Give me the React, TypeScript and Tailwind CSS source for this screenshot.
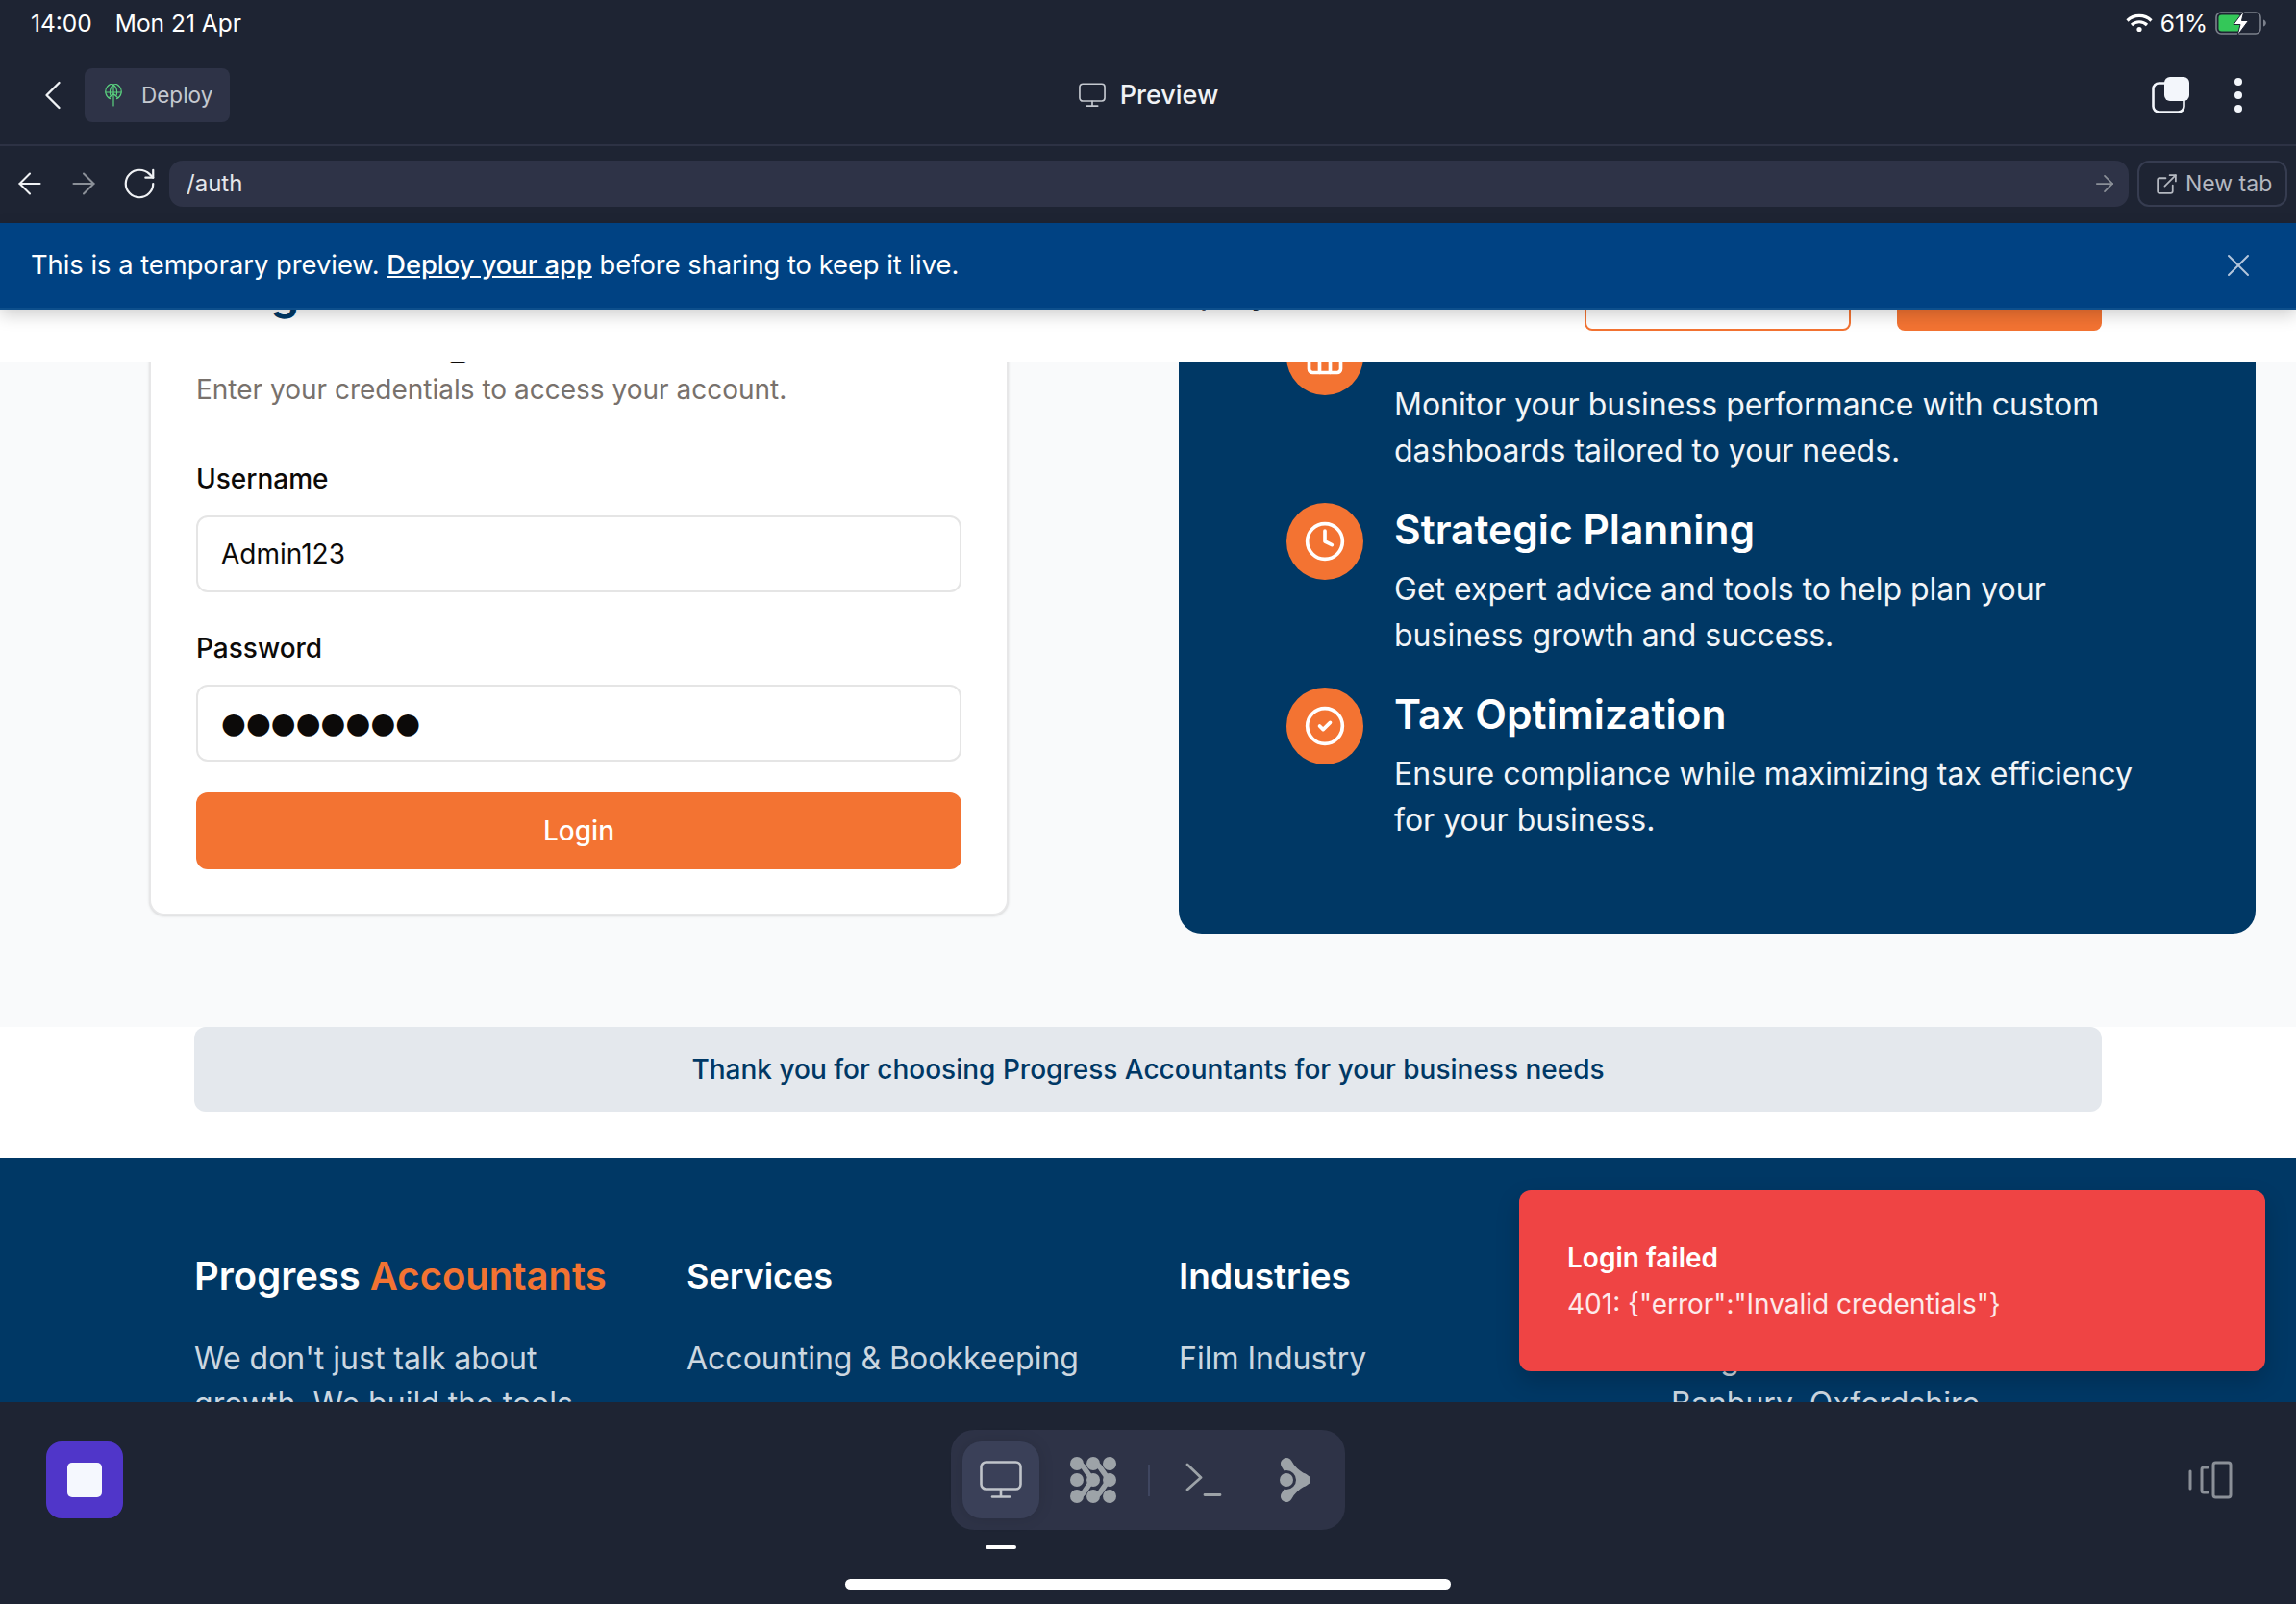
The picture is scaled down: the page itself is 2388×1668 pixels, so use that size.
import React from 'react';
import { ArrowLeft, ArrowRight, ChevronLeft, CircleCheck, Clock, Columns3, ExternalLink, RotateCw, X } from 'lucide-react';

function MonitorIcon({ className }: { className?: string }) {
  return (
    <svg className={className} viewBox="0 0 44 40" fill="none" stroke="currentColor" strokeWidth={2.6} strokeLinecap="round" strokeLinejoin="round">
      <rect x="1.5" y="1.5" width="41" height="28" rx="5" />
      <path d="M22 30v7M13 37.5h18" />
    </svg>
  );
}

function DeployIcon() {
  return (
    <svg className="h-[24px] w-[18px] text-[#5ad27f]" viewBox="0 0 18 24" fill="none" stroke="currentColor" strokeWidth={1.2} strokeLinecap="round" strokeLinejoin="round">
      <path d="M5.5 15.6A8.2 8.2 0 1 1 12.5 15.6" />
      <path d="M1 9h16M9 1v22M9 1c-2.6 2-3.6 4.8-3.6 8 0 1.600.3 3 .8 4M9 1c2.600 2 3.600 4.800 3.600 8 0 1.600-.3 3-.8 4M4.800 14.200 9 10.500l4.200 3.700" />
    </svg>
  );
}

function WifiIcon() {
  return (
    <svg className="h-[20px] w-[28px] text-white" viewBox="0 0 28 20" fill="none" stroke="currentColor" strokeWidth={3.2} strokeLinecap="butt">
      <path d="M1.500 7.500a18 18 0 0 1 25 0" />
      <path d="M6 12a11.500 11.500 0 0 1 16 0" />
      <circle cx="14" cy="16.500" r="2.600" fill="currentColor" stroke="none" />
    </svg>
  );
}

function BatteryIcon() {
  return (
    <svg className="h-[26px] w-[54px]" viewBox="0 0 54 26" fill="none">
      <rect x="1" y="2" width="46" height="22" rx="5" stroke="#7c818c" strokeWidth="1.600" />
      <rect x="3.500" y="4.500" width="23" height="17" rx="3" fill="#34c759" />
      <path d="M50 9.500c2 .6 2.800 2 2.800 3.500s-.8 2.900-2.800 3.500z" fill="#7c818c" />
      <path d="M30 0 19 14.500h7L23 26l11.500-15.500h-7z" fill="#fff" stroke="#1e2433" strokeWidth="1" />
    </svg>
  );
}

function TabsIcon() {
  return (
    <svg className="h-[38px] w-[39px] text-[#f3f6fb]" viewBox="0 0 39 38" fill="none">
      <rect x="1.500" y="6.500" width="32" height="30" rx="6" stroke="currentColor" strokeWidth="2.600" />
      <rect x="13" y="0" width="26" height="25" rx="6" fill="currentColor" />
    </svg>
  );
}

function ClusterIcon() {
  return (
    <svg className="h-[48px] w-[48px] text-[#9da3a8]" viewBox="0 0 48 48" fill="currentColor">
      {[7, 24, 41].map((cx) =>
        [7, 24, 41].map((cy) => <circle key={`${cx}-${cy}`} cx={cx} cy={cy} r="7" />),
      )}
      <path d="M7 7c8 0 8 8.500 17 17-9 8.500-9 17-17 17" fill="none" stroke="currentColor" strokeWidth="5.500" />
      <path d="M24 7c8 0 8 8.500 17 17-9 8.500-9 17-17 17" fill="none" stroke="currentColor" strokeWidth="5.500" />
    </svg>
  );
}

function BranchIcon() {
  return (
    <svg className="h-[48px] w-[32px] text-[#9da3a8]" viewBox="0 0 32 48" fill="currentColor">
      <path d="M7 7c4 8 9 12 18 17-9 5-14 9-18 17" fill="none" stroke="currentColor" strokeWidth="12" strokeLinecap="round" />
      <circle cx="24" cy="24" r="7" />
      <circle cx="7" cy="24" r="10" fill="#2e3347" />
      <circle cx="7" cy="24" r="7" />
    </svg>
  );
}

function TerminalGlyph() {
  return (
    <svg className="h-[36px] w-[38px] text-[#9da3a8]" viewBox="0 0 38 36" fill="none" stroke="currentColor" strokeWidth="2.800" strokeLinecap="round" strokeLinejoin="round">
      <path d="M2 2l14 13.500L2 28M20 33.500h16" />
    </svg>
  );
}

function SplitIcon() {
  return (
    <svg className="h-[40px] w-[46px] text-[#8b9098]" viewBox="0 0 46 40" fill="none" stroke="currentColor" strokeWidth="3" strokeLinecap="round" strokeLinejoin="round">
      <rect x="26" y="2" width="18" height="36" rx="2.500" />
      <path d="M20 7h-4a2 2 0 0 0-2 2v22a2 2 0 0 0 2 2h4M2 11v18" />
    </svg>
  );
}

const features = [
  {
    icon: Columns3,
    title: 'Business Dashboard',
    text: 'Monitor your business performance with custom dashboards tailored to your needs.',
  },
  {
    icon: Clock,
    title: 'Strategic Planning',
    text: 'Get expert advice and tools to help plan your business growth and success.',
  },
  {
    icon: CircleCheck,
    title: 'Tax Optimization',
    text: 'Ensure compliance while maximizing tax efficiency for your business.',
  },
];

function LoginCard() {
  return (
    <div className="w-[894px] rounded-[16px] border-2 border-[#e7e7e8] bg-white px-[47px] pt-[46px] pb-[46px] shadow-sm">
      <h2 className="text-[47px] leading-[64px] font-semibold text-[#0c0a09]">Account Login</h2>
      <p className="text-[28px] leading-[44px] text-[#78716c]">Enter your credentials to access your account.</p>
      <label className="mt-[51px] block text-[28px] leading-[40px] font-medium text-[#0c0a09]">Username</label>
      <input
        readOnly
        value="Admin123"
        className="mt-[18px] block h-[80px] w-full rounded-[12px] border-2 border-[#e5e5e5] bg-white px-[24px] text-[28px] text-[#0c0a09] outline-none"
      />
      <label className="mt-[38px] block text-[28px] leading-[40px] font-medium text-[#0c0a09]">Password</label>
      <input
        readOnly
        value="●●●●●●●●"
        className="mt-[18px] block h-[80px] w-full rounded-[12px] border-2 border-[#e5e5e5] bg-white px-[24px] pb-[2px] font-['DejaVu_Sans',sans-serif] text-[29.7px] text-[#0c0a09] outline-none"
      />
      <button className="mt-[32px] block h-[80px] w-full rounded-[12px] bg-[#f37332] text-[28px] font-medium text-white">Login</button>
    </div>
  );
}

function FeaturePanel() {
  return (
    <div className="flex w-[1120px] flex-col gap-[30px] rounded-[24px] bg-[#003865] pt-[60px] pr-[112px] pb-[94px] pl-[112px]">
      {features.map((f) => (
        <div key={f.title} className="flex gap-[32px]">
          <div className="flex h-[80px] w-[80px] shrink-0 items-center justify-center rounded-full bg-[#f37332] text-white">
            <f.icon size={44} strokeWidth={2} />
          </div>
          <div>
            <h3 className="text-[42.5px] leading-[56px] font-semibold text-white">{f.title}</h3>
            <p className="mt-[10px] text-[32px] leading-[48px] text-[#f2f5f8]">{f.text}</p>
          </div>
        </div>
      ))}
    </div>
  );
}

function Footer() {
  return (
    <footer className="bg-[#003865] px-[202px] pt-[95px] pb-[64px]">
      <div className="grid w-[1984px] grid-cols-4 gap-[64px]">
        <div>
          <h4 className="text-[40px] leading-[56px] font-semibold text-white">
            Progress <span className="text-[#f37332]">Accountants</span>
          </h4>
          <p className="mt-[34px] text-[32px] leading-[47px] text-[#ccd7e0]">We don't just talk about growth. We build the tools that make it happen.</p>
        </div>
        <div>
          <h4 className="text-[36px] leading-[56px] font-semibold text-white">Services</h4>
          <ul className="mt-[34px] text-[32px] leading-[47px] text-[#ccd7e0]">
            <li>Accounting &amp; Bookkeeping</li>
            <li className="mt-[16px]">Tax Planning</li>
          </ul>
        </div>
        <div>
          <h4 className="text-[37px] leading-[56px] font-semibold text-white">Industries</h4>
          <ul className="mt-[34px] text-[32px] leading-[47px] text-[#ccd7e0]">
            <li>Film Industry</li>
            <li className="mt-[16px]">Music Industry</li>
          </ul>
        </div>
        <div>
          <h4 className="text-[36px] leading-[56px] font-semibold text-white">Contact</h4>
          <p className="mt-[34px] text-[32px] leading-[47px] text-[#ccd7e0]">
            Progress Accountants
            <br />
            Banbury, Oxfordshire
          </p>
        </div>
      </div>
    </footer>
  );
}

export default function App() {
  return (
    <div className="flex h-[1668px] w-[2388px] flex-col overflow-hidden bg-[#1e2433] font-['Inter',sans-serif]">
      {/* status bar */}
      <div className="flex h-[48px] items-center justify-between pr-[30px] pl-[32px] text-[24.5px] text-white">
        <div className="flex gap-[24px]">
          <span>14:00</span>
          <span>Mon 21 Apr</span>
        </div>
        <div className="flex items-center gap-[8px]">
          <WifiIcon />
          <span>61%</span>
          <BatteryIcon />
        </div>
      </div>

      {/* preview header */}
      <div className="grid h-[104px] grid-cols-3 items-center border-b-2 border-[#2d3244] pr-[56px] pl-[29px]">
        <div className="flex items-center gap-[7px]">
          <ChevronLeft className="text-[#f0f2f5]" size={52} strokeWidth={1.1} />
          <div className="flex h-[56px] w-[151px] items-center gap-[20px] rounded-[8px] bg-[#2e3347] pl-[21px] text-[22.5px] text-[#c5c9d0]">
            <DeployIcon />
            <span>Deploy</span>
          </div>
        </div>
        <div className="flex items-center justify-center gap-[15px] pl-[28px] text-[27px] font-medium text-[#f0f2f5]">
          <MonitorIcon className="h-[26px] w-[28px] text-[#c5c9d0]" />
          <span>Preview</span>
        </div>
        <div className="flex items-center justify-end gap-[47px]">
          <TabsIcon />
          <div className="flex flex-col gap-[6px]">
            <div className="h-[8px] w-[8px] rounded-full bg-[#f3f6fb]" />
            <div className="h-[8px] w-[8px] rounded-full bg-[#f3f6fb]" />
            <div className="h-[8px] w-[8px] rounded-full bg-[#f3f6fb]" />
          </div>
        </div>
      </div>

      {/* address row */}
      <div className="flex h-[80px] items-center pb-[2px] pl-[13px]">
        <ArrowLeft className="text-[#f0f2f5]" size={36} strokeWidth={1.4} />
        <ArrowRight className="ml-[20px] text-[#8b9098]" size={36} strokeWidth={1.4} />
        <RotateCw className="ml-[21px] text-[#f0f2f5]" size={38} strokeWidth={1.4} />
        <div className="ml-[12px] flex h-[48px] w-[2038px] items-center justify-between rounded-[14px] bg-[#2e3347] pr-[11px] pl-[18px] text-[24px] text-[#e4e6ea]">
          <span>/auth</span>
          <ArrowRight className="text-[#8b9098]" size={28} strokeWidth={1.5} />
        </div>
        <div className="ml-[9px] flex h-[48px] w-[156px] items-center gap-[7px] rounded-[12px] border-2 border-[#363c50] pl-[16px] text-[23px] text-[#b4b8c0]">
          <ExternalLink size={25} strokeWidth={1.7} />
          <span>New tab</span>
        </div>
      </div>

      {/* preview banner */}
      <div className="relative z-20 flex h-[90px] items-center justify-between border-b-2 border-[#0d4f8c] bg-[#004283] pr-[40px] pl-[32px] text-[27.3px] text-white shadow-[0_6px_16px_rgba(0,0,0,0.18)]">
        <p>
          This is a temporary preview. <span className="font-medium underline">Deploy your app</span> before sharing to keep it live.
        </p>
        <X className="text-[#b4c6dc]" size={40} strokeWidth={1.2} />
      </div>

      {/* previewed page, scrolled */}
      <div className="relative flex-1 overflow-hidden bg-white">
        <nav className="absolute top-0 right-0 left-0 z-10 h-[54px] overflow-hidden bg-white">
          <div className="-mt-[74px] flex h-[128px] items-center pr-[202px] pl-[203px]">
            <div className="pb-[16px] text-[48px] font-semibold text-[#003865]">
              Progress <span className="text-[#f37332]">Accountants</span>
            </div>
            <div className="ml-[464px] pb-[12px] text-[30px] font-medium text-[#1f2937]">Company</div>
            <div className="ml-auto flex gap-[48px]">
              <button className="h-[64px] w-[277px] rounded-[8px] border-2 border-[#f37332] pb-[12px] text-[26px] font-medium text-[#f37332]">Client Portal</button>
              <button className="h-[64px] w-[213px] rounded-[8px] bg-[#f37332] pb-[12px] text-[26px] font-medium text-white">Book a Call</button>
            </div>
          </div>
        </nav>

        <main className="bg-[#f9fafb]">
          <div className="-mt-[51px] flex items-start justify-between pr-[42px] pb-[97px] pl-[155px]">
            <LoginCard />
            <FeaturePanel />
          </div>
        </main>

        <div className="bg-white px-[202px] pb-[48px]">
          <div className="flex h-[88px] w-[1984px] items-center justify-center rounded-[12px] bg-[#e4e8ed] text-[28px] font-medium text-[#003865]">
            Thank you for choosing Progress Accountants for your business needs
          </div>
        </div>

        <Footer />

        {/* toast */}
        <div className="absolute top-[916px] left-[1580px] z-10 flex h-[188px] w-[776px] flex-col justify-center rounded-[12px] bg-[#ef4444] px-[50px] text-[28px] text-white shadow-[0_10px_24px_rgba(0,0,0,0.18)]">
          <div className="leading-[40px] font-semibold">Login failed</div>
          <div className="mt-[8px] leading-[40px] text-[#fdeaea]">401: {'{"error":"Invalid credentials"}'}</div>
        </div>
      </div>

      {/* bottom tool bar */}
      <div className="h-[210px] shrink-0 bg-[#1e2433]">
        <div className="grid h-[184px] grid-cols-3 items-start pt-[29px] pr-[66px] pl-[48px]">
          <div className="mt-[12px] flex h-[80px] w-[80px] items-center justify-center rounded-[16px] bg-[#5036c9]">
            <div className="h-[36px] w-[36px] rounded-[5px] bg-[#f5f8fe]" />
          </div>
          <div className="flex flex-col items-center pl-[18px]">
            <div className="flex h-[104px] w-[410px] items-center rounded-[24px] bg-[#2e3347] pl-[12px]">
              <div className="flex h-[80px] w-[80px] items-center justify-center rounded-[20px] bg-[#3a4058] text-[#c0c4ca] shadow-[0_0_16px_rgba(0,0,0,0.12)]">
                <MonitorIcon className="h-[40px] w-[44px]" />
              </div>
              <div className="ml-[32px]">
                <ClusterIcon />
              </div>
              <div className="ml-[33px] h-[33px] w-[2px] bg-[#3f4660]" />
              <div className="ml-[37px]">
                <TerminalGlyph />
              </div>
              <div className="ml-[60px]">
                <BranchIcon />
              </div>
            </div>
            <div className="mt-[16px] mr-[306px] h-[4px] w-[32px] rounded-full bg-white" />
          </div>
          <div className="mt-[32px] flex justify-end">
            <SplitIcon />
          </div>
        </div>
        <div className="mx-auto h-[11px] w-[630px] rounded-full bg-white" />
      </div>
    </div>
  );
}
